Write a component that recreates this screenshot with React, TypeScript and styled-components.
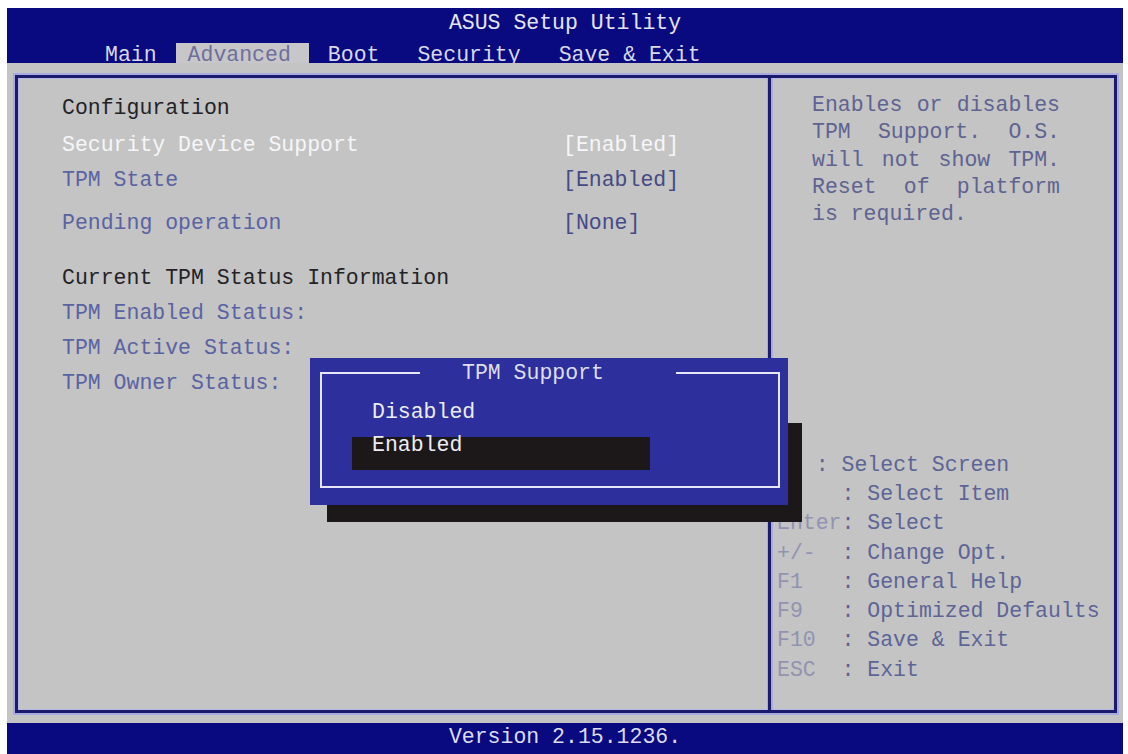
import React from 'react';
import styled, { createGlobalStyle } from 'styled-components';

const C = {
  navy: '#0a0a80',
  gray: '#c4c4c4',
  frame: '#1b1b6b',
  lavender: '#a9a9e2',
  popup: '#2d2f9c',
  dark: '#1c1819',
  heading: '#232327',
  label: '#5a63a2',
  value: '#444b86',
  help: '#5e6391',
  key: '#9293b0',
  desc: '#5d6496',
};

const GlobalStyle = createGlobalStyle`
  html, body { margin: 0; padding: 0; background: #ffffff; }
  body { font-family: "Liberation Mono", "Courier New", monospace; }
  * { box-sizing: border-box; }
`;

const Screen = styled.div`
  position: relative;
  margin: 8px 0 0 7px;
  width: 1116px;
  height: 746px;
  display: flex;
  flex-direction: column;
  font-family: "Liberation Mono", "Courier New", monospace;
  font-size: 21.5px;
  white-space: pre;
`;

const Header = styled.header`
  height: 55px;
  background: ${C.navy};
  display: flex;
  flex-direction: column;
`;

const Title = styled.div`
  height: 30px;
  line-height: 30px;
  text-align: center;
  color: #e4e4f2;
  padding-left: 0;
`;

const Tabs = styled.nav`
  flex: 1;
  display: flex;
  align-items: flex-end;
  padding-left: 79px;
`;

const Tab = styled.div<{ $active?: boolean }>`
  height: 20px;
  line-height: 16px;
  padding: ${(p) => (p.$active ? '4px 18px 0 12px' : '4px 19px 0 19px')};
  background: ${(p) => (p.$active ? '#c7c7c9' : 'transparent')};
  color: ${(p) => (p.$active ? '#6f6f9c' : '#d8d8ec')};
`;

const Body = styled.main`
  flex: 1;
  display: flex;
  background: ${C.gray};
  padding: 12px 6px 10px 8px;
`;

const Frame = styled.div`
  flex: 1;
  display: flex;
  border: 3px solid ${C.frame};
  box-shadow: 0 0 0 2px ${C.lavender}, inset 0 0 0 1px #b8b8e6;
`;

const LeftPanel = styled.section`
  width: 749px;
  display: flex;
  flex-direction: column;
  padding: 13px 0 0 44px;
`;

const Row = styled.div<{ $mt?: number }>`
  display: grid;
  grid-template-columns: 501px auto;
  line-height: 35px;
  height: 35px;
  margin-top: ${(p) => p.$mt ?? 0}px;
`;

const Label = styled.span<{ $tone: 'heading' | 'label' | 'selected' }>`
  color: ${(p) =>
    p.$tone === 'heading' ? C.heading : p.$tone === 'selected' ? '#f6f6f8' : C.label};
`;

const Value = styled.span<{ $selected?: boolean }>`
  color: ${(p) => (p.$selected ? '#f6f6f8' : C.value)};
`;

const Divider = styled.div`
  width: 6px;
  background: ${C.frame};
  border-left: 1px solid ${C.lavender};
  border-right: 2px solid ${C.lavender};
`;

const RightPanel = styled.aside`
  flex: 1;
  display: flex;
  flex-direction: column;
`;

const HelpText = styled.p`
  margin: 14px 0 0 39px;
  width: 248px;
  white-space: normal;
  text-align: justify;
  line-height: 27.3px;
  color: ${C.help};
`;

const Legend = styled.div`
  margin: auto 0 0 4px;
  padding-bottom: 25px;
  display: flex;
  flex-direction: column;
`;

const LegendRow = styled.div`
  line-height: 29.3px;
  height: 29.3px;
  color: ${C.desc};
`;

const Key = styled.span`
  color: ${C.key};
`;

const Footer = styled.footer`
  height: 31px;
  line-height: 28px;
  background: ${C.navy};
  color: #dcdcf2;
  text-align: center;
`;

const Shadow = styled.div`
  position: absolute;
  left: 320px;
  top: 415px;
  width: 475px;
  height: 99px;
  background: ${C.dark};
  z-index: 1;
`;

const Popup = styled.div`
  position: absolute;
  left: 303px;
  top: 350px;
  width: 478px;
  height: 147px;
  background: ${C.popup};
  z-index: 2;
  display: flex;
  flex-direction: column;
`;

const PopupFrame = styled.fieldset`
  margin: 5px 8px 17px 10px;
  min-width: 0;
  flex: 1;
  border: 2px solid #e6e6f8;
  padding: 21px 0 16px 30px;
`;

const PopupTitle = styled.legend`
  margin-left: 68px;
  padding: 0 72px 0 42px;
  line-height: 20px;
  height: 20px;
  color: #dedef2;
`;

const Option = styled.div<{ $selected?: boolean }>`
  width: 298px;
  height: 33px;
  line-height: 16px;
  padding-left: 20px;
  color: #ececf6;
  background: ${(p) => (p.$selected ? C.dark : 'transparent')};
`;

const tabs = ['Main', 'Advanced', 'Boot', 'Security', 'Save & Exit'];

const rows: { label: string; value?: string; tone: 'heading' | 'label' | 'selected'; mt: number }[] = [
  { label: 'Configuration', tone: 'heading', mt: 0 },
  { label: 'Security Device Support', value: '[Enabled]', tone: 'selected', mt: 2 },
  { label: 'TPM State', value: '[Enabled]', tone: 'label', mt: 0 },
  { label: 'Pending operation', value: '[None]', tone: 'label', mt: 8 },
  { label: 'Current TPM Status Information', tone: 'heading', mt: 20 },
  { label: 'TPM Enabled Status:', tone: 'label', mt: 0 },
  { label: 'TPM Active Status:', tone: 'label', mt: 0 },
  { label: 'TPM Owner Status:', tone: 'label', mt: 0 },
];

const legend: [string, string][] = [
  ['   ', ': Select Screen'],
  ['     ', ': Select Item'],
  ['Enter', ': Select'],
  ['+/-  ', ': Change Opt.'],
  ['F1   ', ': General Help'],
  ['F9   ', ': Optimized Defaults'],
  ['F10  ', ': Save & Exit'],
  ['ESC  ', ': Exit'],
];

export default function App() {
  return (
    <>
      <GlobalStyle />
      <Screen>
        <Header>
          <Title>ASUS Setup Utility</Title>
          <Tabs>
            {tabs.map((t) => (
              <Tab key={t} $active={t === 'Advanced'}>
                {t}
              </Tab>
            ))}
          </Tabs>
        </Header>
        <Body>
          <Frame>
            <LeftPanel>
              {rows.map((r) => (
                <Row key={r.label} $mt={r.mt}>
                  <Label $tone={r.tone}>{r.label}</Label>
                  {r.value && <Value $selected={r.tone === 'selected'}>{r.value}</Value>}
                </Row>
              ))}
            </LeftPanel>
            <Divider />
            <RightPanel>
              <HelpText>
                Enables or disables TPM Support. O.S. will not show TPM. Reset of platform is required.
              </HelpText>
              <Legend>
                {legend.map(([k, d], i) => (
                  <LegendRow key={i}>
                    <Key>{k}</Key>
                    {d}
                  </LegendRow>
                ))}
              </Legend>
            </RightPanel>
          </Frame>
        </Body>
        <Footer>Version 2.15.1236.</Footer>
        <Shadow />
        <Popup>
          <PopupFrame>
            <PopupTitle>TPM Support</PopupTitle>
            <Option>Disabled</Option>
            <Option $selected>Enabled</Option>
          </PopupFrame>
        </Popup>
      </Screen>
    </>
  );
}
